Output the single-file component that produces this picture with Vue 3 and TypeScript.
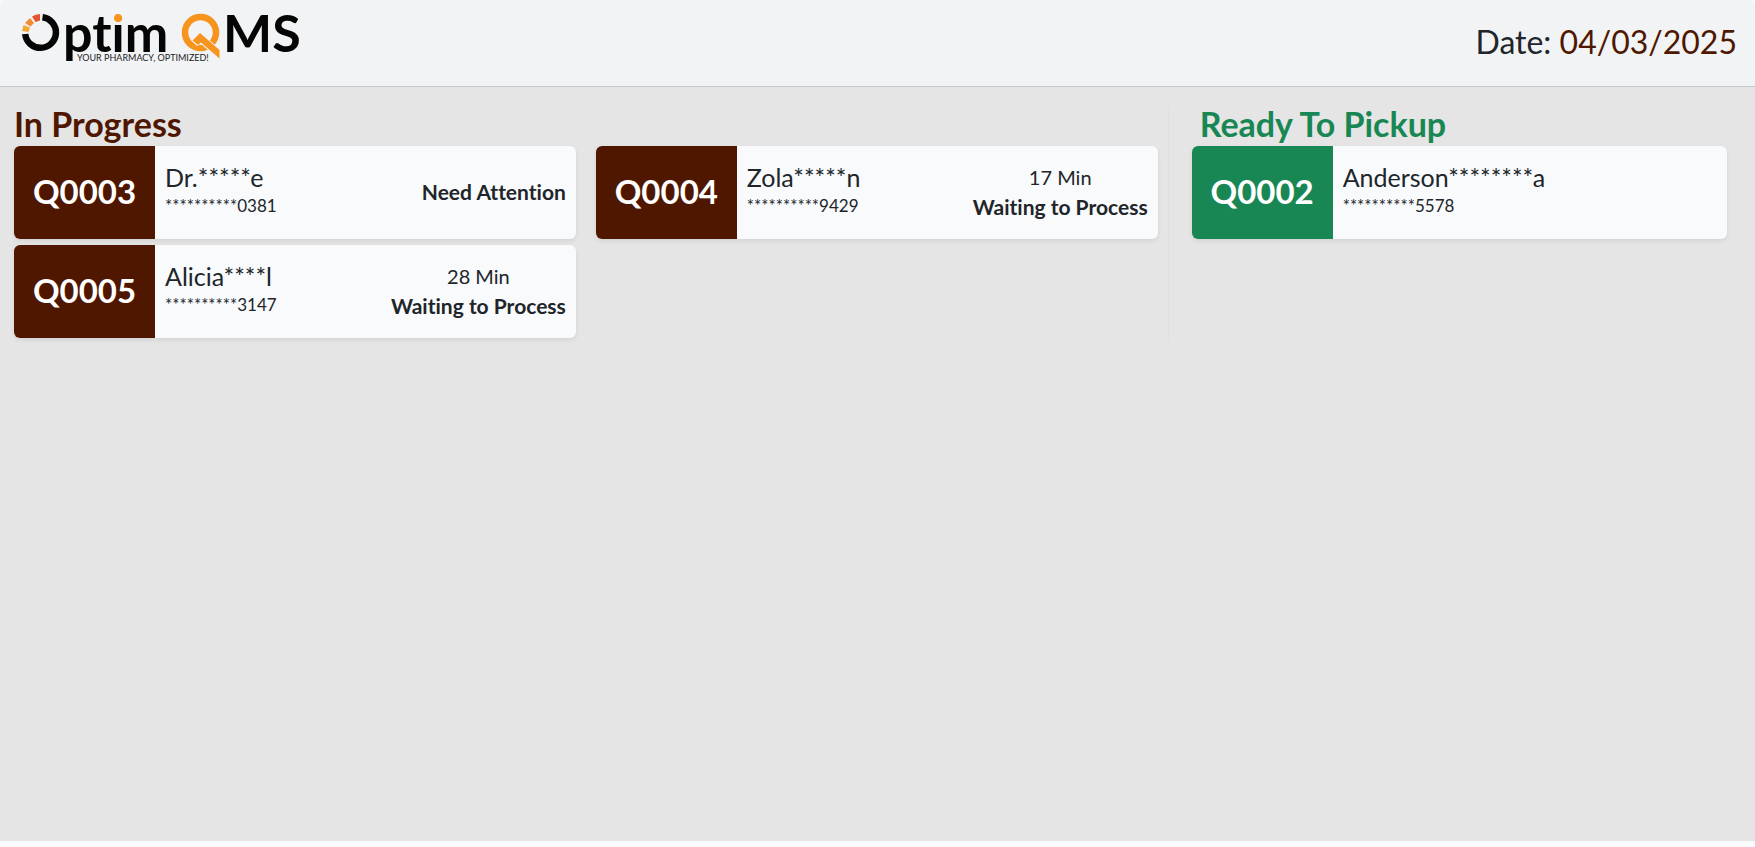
<script setup lang="ts">
interface Ticket {
  code: string
  name: string
  phone: string
  wait?: string
  status?: string
}

const date = '04/03/2025'

const inProgress: Ticket[] = [
  { code: 'Q0003', name: 'Dr.*****e', phone: '**********0381', status: 'Need Attention' },
  { code: 'Q0004', name: 'Zola*****n', phone: '**********9429', wait: '17 Min', status: 'Waiting to Process' },
  { code: 'Q0005', name: 'Alicia****l', phone: '**********3147', wait: '28 Min', status: 'Waiting to Process' },
]

const ready: Ticket[] = [{ code: 'Q0002', name: 'Anderson********a', phone: '**********5578' }]
</script>

<template>
  <div class="page">
    <header class="topbar">
      <svg class="logo" width="290" height="72" viewBox="18 0 290 72" role="img" aria-label="Optim QMS">
        <defs>
          <!-- Orange above the x-height so only the dot of the "i" is coloured -->
          <linearGradient id="dot" gradientUnits="userSpaceOnUse" x1="0" y1="0" x2="0" y2="72">
            <stop offset="0.3" stop-color="#f7941d" />
            <stop offset="0.3" stop-color="#050505" />
          </linearGradient>
        </defs>
        <path d="M42.5 17.200A15.400 15.400 0 1 1 25.200 34" fill="none" stroke="#050505" stroke-width="6.500" />
        <path d="M22 31L28.500 32L30 27.500L23.500 25Z" fill="#f2a83b" />
        <path d="M25 23L30.500 26.500L34 23L30 18Z" fill="#ef8d35" />
        <path d="M32 16.500L35.500 22L40 20.500V14Q35.500 14.300 32 16.500Z" fill="#e4572e" />
        <text class="logo-word" x="63" y="52" font-size="52">pt<tspan fill="url(#dot)">i</tspan>m</text>
        <circle cx="200.500" cy="32.500" r="15.500" fill="none" stroke="#f7941d" stroke-width="6.500" />
        <path d="M191 40L200 32L221 50V61L201 44L197 46Z" fill="#f1f3f5" />
        <path d="M192.500 40.500L200 33L219.500 50V58.500L201 42.500L198 45Z" fill="#f7941d" />
        <text class="logo-word" x="223" y="52" font-size="52">MS</text>
        <text class="logo-tag" x="77" y="61" font-size="9">YOUR PHARMACY, OPTIMIZED!</text>
      </svg>
      <p class="date">Date: <time datetime="2025-04-03">{{ date }}</time></p>
    </header>

    <main class="board">
      <section class="lane lane-progress">
        <h1 class="lane-title">In Progress</h1>
        <div class="cards cards-two">
          <article v-for="t in inProgress" :key="t.code" class="card">
            <div class="code">{{ t.code }}</div>
            <div class="person">
              <div class="name">{{ t.name }}</div>
              <div class="phone">{{ t.phone }}</div>
            </div>
            <div class="state">
              <div v-if="t.wait">{{ t.wait }}</div>
              <strong>{{ t.status }}</strong>
            </div>
          </article>
        </div>
      </section>

      <section class="lane lane-ready">
        <h1 class="lane-title">Ready To Pickup</h1>
        <div class="cards">
          <article v-for="t in ready" :key="t.code" class="card">
            <div class="code">{{ t.code }}</div>
            <div class="person">
              <div class="name">{{ t.name }}</div>
              <div class="phone">{{ t.phone }}</div>
            </div>
          </article>
        </div>
      </section>
    </main>
  </div>
</template>

<style>
body {
  margin: 0;
  background: #f8fafc;
}
</style>

<style scoped>
.page {
  box-sizing: border-box;
  min-height: 100vh;
  padding-bottom: 6px;
  display: flex;
  flex-direction: column;
  font-family: Lato, 'Open Sans', sans-serif;
  font-variant-ligatures: none;
  color: #212529;
}

.topbar {
  box-sizing: border-box;
  display: flex;
  justify-content: space-between;
  align-items: flex-start;
  padding: 0 18px 14px;
  background: #f1f3f5;
  border-bottom: 1px solid #c8c9ca;
  border-radius: 6px 6px 0 0;
}

.logo {
  display: block;
}

.logo-word {
  font-weight: 700;
  fill: #050505;
}

.logo-tag {
  font-weight: 400;
  fill: #222;
}

.date {
  margin: 22px 0 0;
  font-size: 32px;
  line-height: 40px;
}

.date time {
  color: #4f1700;
}

.board {
  flex: 1;
  display: grid;
  grid-template-columns: 2fr 1fr;
  align-items: start;
  padding: 19px 2px 0 0;
  background: #e5e5e5;
}

.lane-progress {
  --accent: #4f1700;
  padding: 0 10px 3px 14px;
  border-right: 1px solid #e0e0e0;
}

.lane-ready {
  --accent: #198754;
  padding: 0 26px 0 23px;
}

.lane-title {
  margin: 0;
  padding-bottom: 4px;
  font-size: 34px;
  line-height: 36px;
  font-weight: 700;
  color: var(--accent);
}

.lane-ready .lane-title {
  padding-left: 8px;
}

.cards {
  display: grid;
  gap: 6px 20px;
}

.cards-two {
  grid-template-columns: 1fr 1fr;
}

.card {
  display: flex;
  min-height: 93px;
  border-radius: 6px;
  overflow: hidden;
  background: #f8fafc;
  box-shadow: 0 2px 4px rgba(0, 0, 0, 0.08);
}

.code {
  box-sizing: border-box;
  width: 141px;
  padding-bottom: 3px;
  display: flex;
  align-items: center;
  justify-content: center;
  background: var(--accent);
  color: #fff;
  font-size: 33px;
  font-weight: 700;
}

.person {
  flex: 1;
  padding: 15px 10px;
}

.name {
  font-size: 25px;
  line-height: 32px;
}

.phone {
  font-size: 17px;
  line-height: 26px;
}

.state {
  align-self: center;
  padding: 0 10px 2px 0;
  text-align: center;
  font-size: 20px;
  line-height: 30px;
}

.state strong {
  font-size: 21px;
  font-weight: 700;
}
</style>
